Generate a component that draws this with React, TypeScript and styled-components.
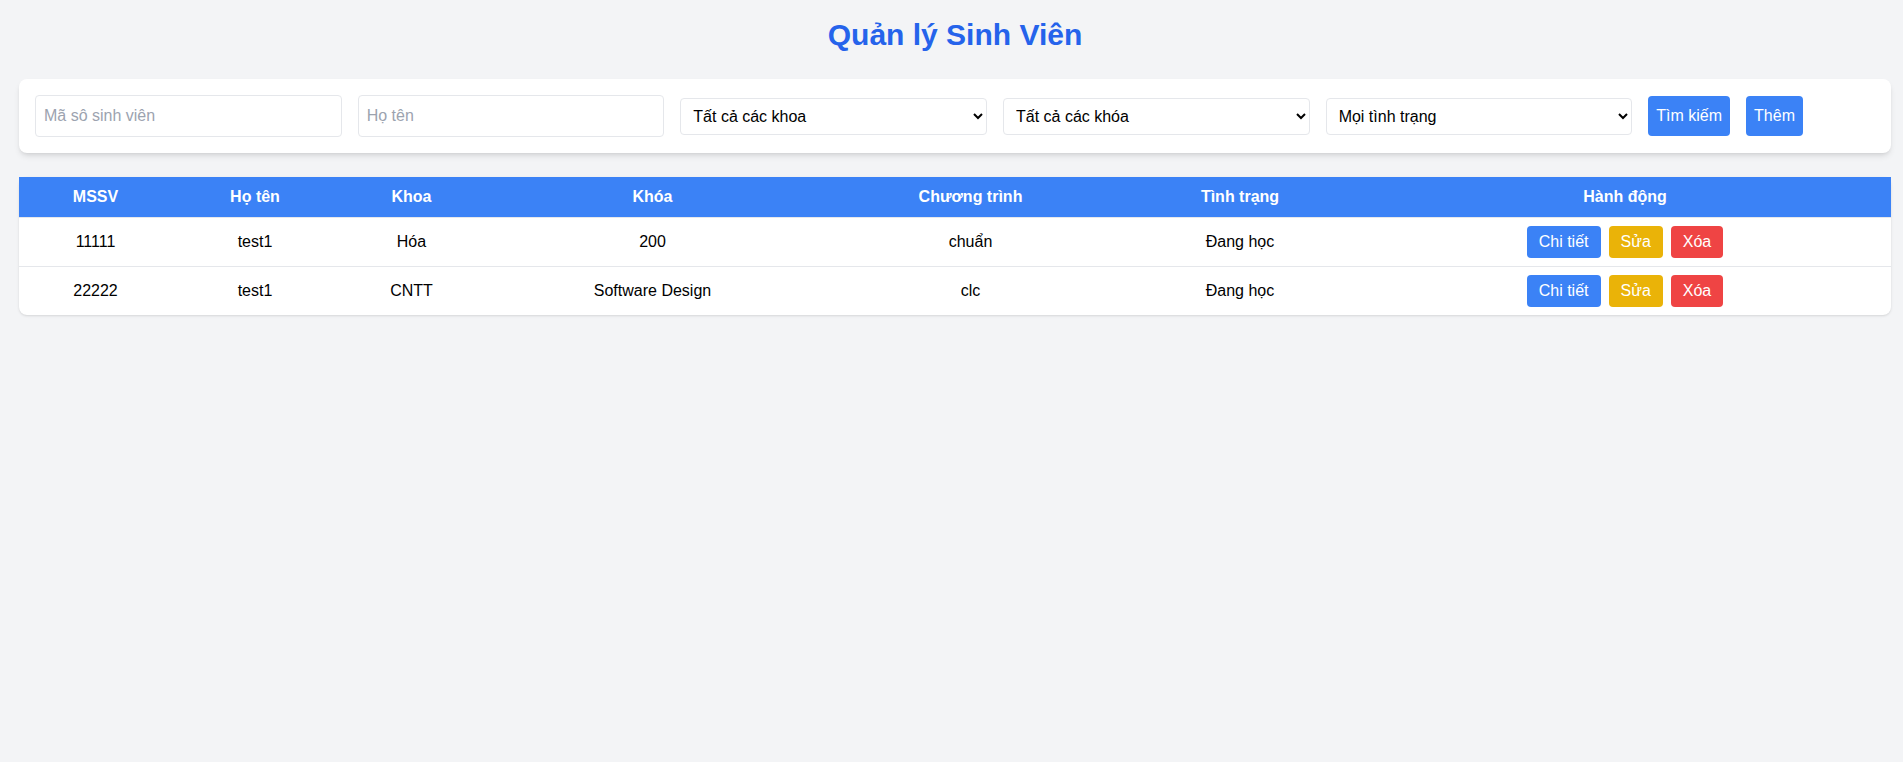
import React from "react";
import styled, { createGlobalStyle } from "styled-components";

const GlobalStyle = createGlobalStyle`
  html, body {
    margin: 0;
    padding: 0;
    background: #f3f4f6;
  }
  body {
    font-family: "Liberation Sans", Arial, sans-serif;
    font-size: 16px;
    line-height: 24px;
    color: #000;
  }
  *, *::before, *::after { box-sizing: border-box; }
`;

const Page = styled.div`
  min-height: 762px;
  padding: 17px 12px 0 19px;
  background: #f3f4f6;
`;

const Title = styled.h1`
  margin: 0 0 26px;
  text-align: center;
  font-size: 30px;
  line-height: 36px;
  font-weight: 700;
  color: #2563eb;
`;

const FilterCard = styled.div`
  display: flex;
  align-items: center;
  gap: 16px;
  padding: 16px;
  margin-bottom: 24px;
  background: #fff;
  border-radius: 8px;
  box-shadow: 0 4px 6px -1px rgba(0, 0, 0, 0.1), 0 2px 4px -2px rgba(0, 0, 0, 0.1);
`;

const TextField = styled.input`
  width: 16.6667%;
  padding: 8px;
  border: 1px solid #e5e7eb;
  border-radius: 4px;
  font-family: inherit;
  font-size: 16px;
  line-height: 24px;
  color: #000;
  background: #fff;
  outline: none;
  &::placeholder { color: #9ca3af; }
`;

const SelectField = styled.select`
  width: 16.6667%;
  padding: 8px;
  border: 1px solid #e5e7eb;
  border-radius: 4px;
  font-family: inherit;
  font-size: 16px;
  color: #000;
  background: #fff;
  outline: none;
`;

const PrimaryButton = styled.button`
  flex: none;
  padding: 8px;
  border: none;
  border-radius: 4px;
  background: #3b82f6;
  color: #fff;
  font-family: inherit;
  font-size: 16px;
  line-height: 24px;
  cursor: pointer;
`;

const TableCard = styled.div`
  background: #fff;
  border-radius: 8px;
  box-shadow: 0 1px 3px rgba(0, 0, 0, 0.1), 0 1px 2px -1px rgba(0, 0, 0, 0.1);
`;

const Table = styled.table`
  width: 100%;
  border-collapse: collapse;
  table-layout: fixed;
`;

const HeadRow = styled.tr`
  background: #3b82f6;
`;

const HeadCell = styled.th<{ $w?: number }>`
  ${(p) => (p.$w ? `width: ${p.$w}px;` : "")}
  padding: 8px 16px;
  color: #fff;
  font-weight: 700;
  font-size: 16px;
  line-height: 24px;
  text-align: center;
`;

const BodyRow = styled.tr`
  border-top: 1px solid #e5e7eb;
`;

const Cell = styled.td`
  padding: 8px 16px;
  text-align: center;
  font-size: 16px;
  line-height: 24px;
  height: 48px;
`;

const ActionGroup = styled.div`
  display: flex;
  justify-content: center;
  gap: 8px;
`;

const tones = {
  blue: "#3b82f6",
  yellow: "#eab308",
  red: "#ef4444",
};

const ActionButton = styled.button<{ $tone: keyof typeof tones }>`
  padding: 4px 12px;
  border: none;
  border-radius: 4px;
  background: ${(p) => tones[p.$tone]};
  color: #fff;
  font-family: inherit;
  font-size: 16px;
  line-height: 24px;
  cursor: pointer;
`;

const columns: { label: string; w?: number }[] = [
  { label: "MSSV", w: 153 },
  { label: "Họ tên", w: 166 },
  { label: "Khoa", w: 147 },
  { label: "Khóa", w: 335 },
  { label: "Chương trình", w: 301 },
  { label: "Tình trạng", w: 238 },
  { label: "Hành động" },
];

const students = [
  { id: "11111", name: "test1", faculty: "Hóa", course: "200", program: "chuẩn", status: "Đang học" },
  { id: "22222", name: "test1", faculty: "CNTT", course: "Software Design", program: "clc", status: "Đang học" },
];

export default function App() {
  return (
    <>
      <GlobalStyle />
      <Page>
        <Title>Quản lý Sinh Viên</Title>
        <FilterCard>
          <TextField placeholder="Mã sô sinh viên" />
          <TextField placeholder="Họ tên" />
          <SelectField defaultValue="">
            <option value="">Tất cả các khoa</option>
          </SelectField>
          <SelectField defaultValue="">
            <option value="">Tất cả các khóa</option>
          </SelectField>
          <SelectField defaultValue="">
            <option value="">Mọi tình trạng</option>
          </SelectField>
          <PrimaryButton>Tìm kiếm</PrimaryButton>
          <PrimaryButton>Thêm</PrimaryButton>
        </FilterCard>
        <TableCard>
          <Table>
            <thead>
              <HeadRow>
                {columns.map((c) => (
                  <HeadCell key={c.label} $w={c.w}>
                    {c.label}
                  </HeadCell>
                ))}
              </HeadRow>
            </thead>
            <tbody>
              {students.map((s) => (
                <BodyRow key={s.id}>
                  <Cell>{s.id}</Cell>
                  <Cell>{s.name}</Cell>
                  <Cell>{s.faculty}</Cell>
                  <Cell>{s.course}</Cell>
                  <Cell>{s.program}</Cell>
                  <Cell>{s.status}</Cell>
                  <Cell>
                    <ActionGroup>
                      <ActionButton $tone="blue">Chi tiết</ActionButton>
                      <ActionButton $tone="yellow">Sửa</ActionButton>
                      <ActionButton $tone="red">Xóa</ActionButton>
                    </ActionGroup>
                  </Cell>
                </BodyRow>
              ))}
            </tbody>
          </Table>
        </TableCard>
      </Page>
    </>
  );
}
